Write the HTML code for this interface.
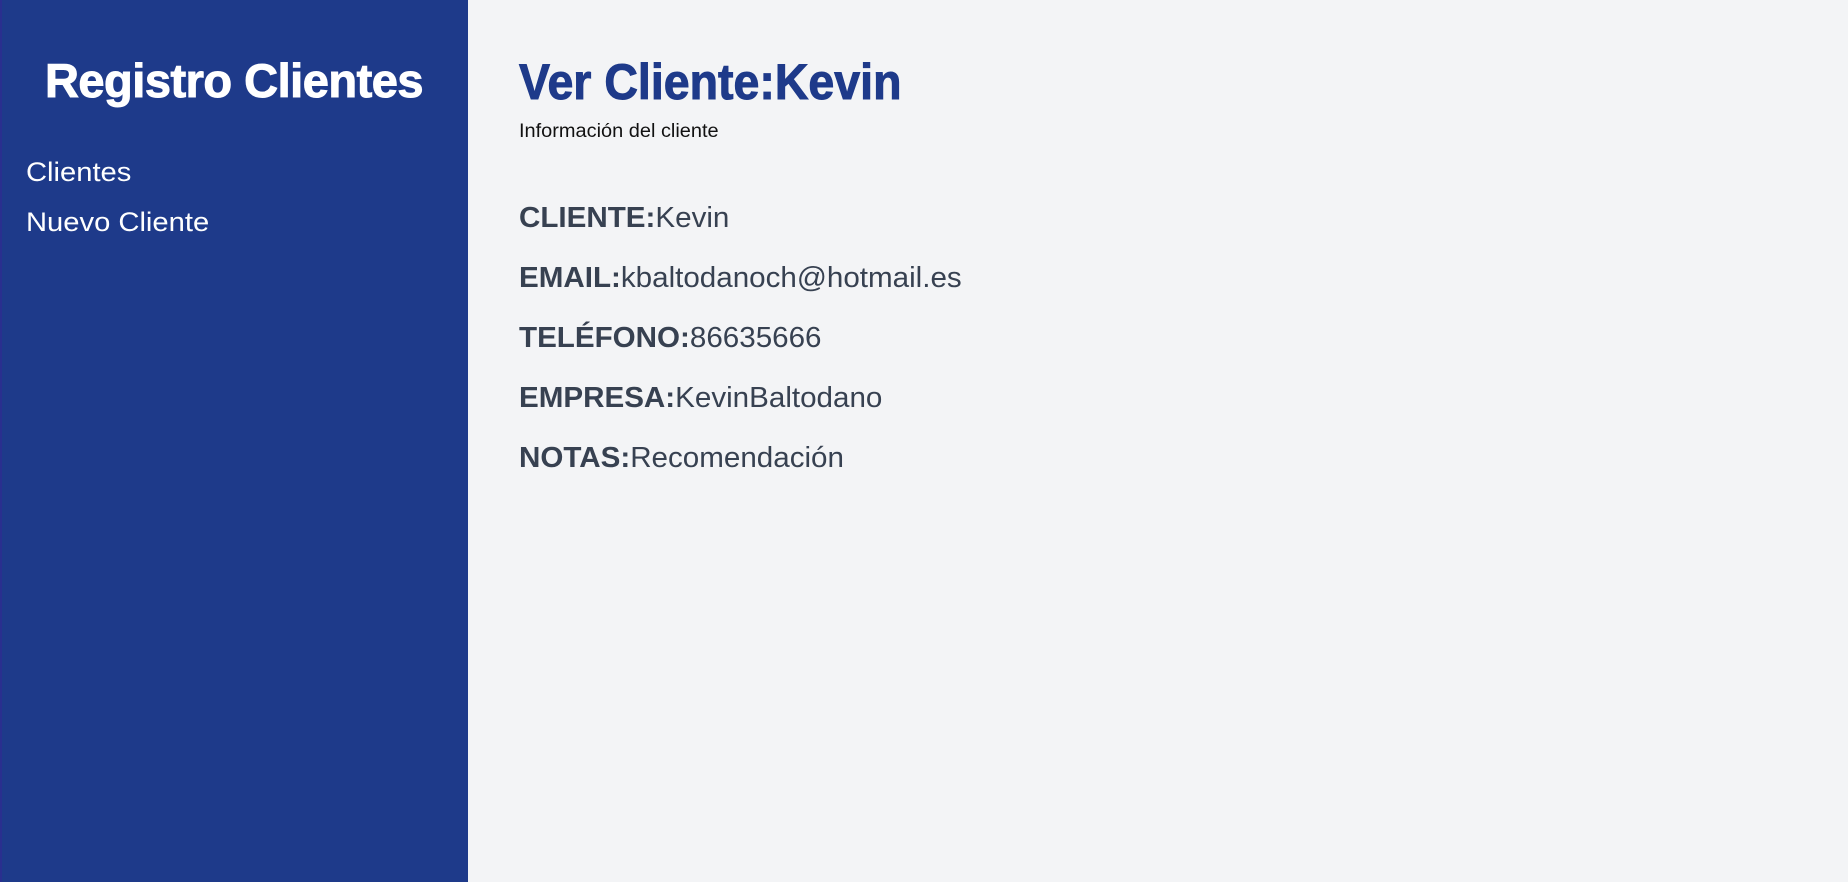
<!DOCTYPE html>
<html><head><meta charset="utf-8"><style>
html,body{margin:0;padding:0;width:1848px;height:882px;overflow:hidden;background:#f3f4f6;font-family:"Liberation Sans",sans-serif}
.side{position:absolute;left:0;top:0;width:468px;height:882px;background:#1e3a8a;border-left:2px solid #2a2f8f;box-sizing:border-box}
.t{position:absolute;white-space:nowrap;line-height:1}
.h1{left:0;width:468px;text-align:center;top:57px;font-size:47px;font-weight:bold;color:#fff;letter-spacing:-0.5px;-webkit-text-stroke:1px #fff}
.nav{color:#fff;font-size:27px;transform:scaleX(1.08);transform-origin:0 0}
.h2{left:519px;top:57px;font-size:50px;font-weight:bold;color:#1e3a8a;transform:scaleX(0.93);transform-origin:0 0;-webkit-text-stroke:1px #1e3a8a}
.sub{left:519px;top:122px;font-size:19px;color:#111;transform:scaleX(1.05);transform-origin:0 0}
.f{left:519px;font-size:29px;color:#374151;transform:scaleX(1.02);transform-origin:0 0}
.f b{font-weight:bold}
</style></head><body>
<div class="side"></div>
<div class="t h1">Registro Clientes</div>
<div class="t nav" style="left:26px;top:159px">Clientes</div>
<div class="t nav" style="left:26px;top:209px">Nuevo Cliente</div>
<div class="t h2">Ver Cliente:Kevin</div>
<div class="t sub">Información del cliente</div>
<div class="t f" style="top:204px"><b>CLIENTE:</b>Kevin</div>
<div class="t f" style="top:264px"><b>EMAIL:</b>kbaltodanoch@hotmail.es</div>
<div class="t f" style="top:324px"><b>TELÉFONO:</b>86635666</div>
<div class="t f" style="top:384px"><b>EMPRESA:</b>KevinBaltodano</div>
<div class="t f" style="top:444px"><b>NOTAS:</b>Recomendación</div>
</body></html>
